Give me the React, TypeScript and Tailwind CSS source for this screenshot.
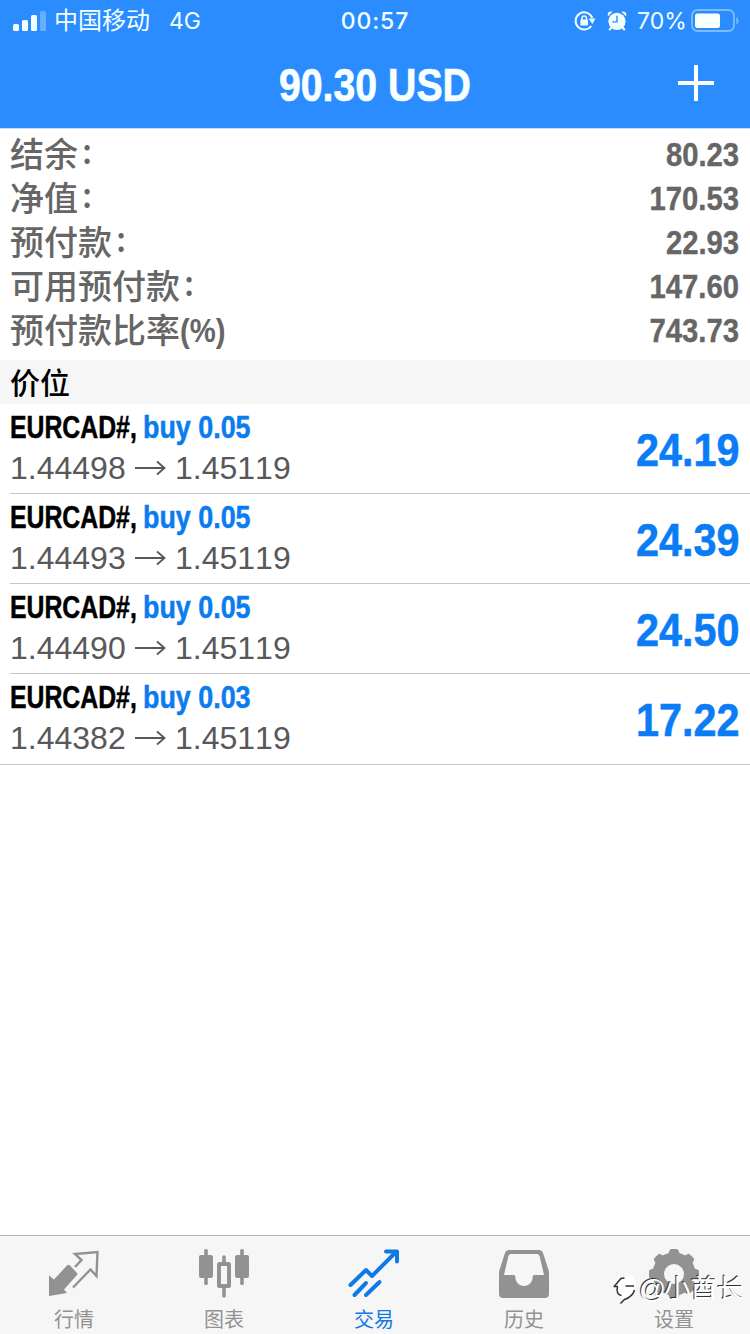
import type { ReactNode } from "react";

const summary = [
  { label: "结余", colon: true, value: "80.23" },
  { label: "净值", colon: true, value: "170.53" },
  { label: "预付款", colon: true, value: "22.93" },
  { label: "可用预付款", colon: true, value: "147.60" },
  { label: "预付款比率", colon: false, value: "743.73" },
];

const positions = [
  { volume: "buy 0.05", open: "1.44498", now: "1.45119", profit: "24.19" },
  { volume: "buy 0.05", open: "1.44493", now: "1.45119", profit: "24.39" },
  { volume: "buy 0.05", open: "1.44490", now: "1.45119", profit: "24.50" },
  { volume: "buy 0.03", open: "1.44382", now: "1.45119", profit: "17.22" },
];

const gearTeeth = [0, 45, 90, 135, 180, 225, 270, 315];

function StatusBar() {
  return (
    <div className="flex h-[41px] items-center justify-between text-[#f2ffff]">
      <div className="flex w-[300px] items-center pl-[13px]">
        <svg width="34" height="20" viewBox="0 -1 34 20" fill="currentColor">
          <rect x="0" y="12" width="6" height="7" rx="1.5" />
          <rect x="9" y="8" width="6" height="11" rx="1.5" />
          <rect x="18" y="3" width="6" height="16" rx="1.5" />
          <rect x="27" y="-1" width="6" height="20" rx="1.5" opacity=".3" />
        </svg>
        <span className="ml-[7px] mt-px text-[24px] leading-10">中国移动</span>
        <span className="ml-[19px] mt-px font-['Inter'] text-[23px] leading-10">4G</span>
      </div>
      <span className="mt-px font-['Inter'] text-[23px] font-medium leading-10 tracking-[0.9px]">00:57</span>
      <div className="flex w-[300px] items-center justify-end pr-[11px]">
        <svg width="22" height="22" viewBox="0 0 22 22" fill="none" stroke="currentColor" strokeWidth="2">
          <path d="M17.2 16A8.6 8.6 0 1 1 18.3 8" />
          <path d="M14.5 8.5h7L18.4 14z" fill="currentColor" stroke="none" />
          <rect x="6.4" y="9.6" width="7.6" height="5.9" rx=".7" fill="currentColor" stroke="none" />
          <path d="M8 10V8.2a2.2 2.2 0 0 1 4.4 0V10" strokeWidth="1.5" />
        </svg>
        <svg className="ml-[11px]" width="20" height="22" viewBox="0 0 20 22" fill="currentColor">
          <circle cx="10" cy="11.3" r="8.6" />
          <path d="M1 6.2C-.2 3 2.2.8 5.5 1.8zM19 6.2C20.2 3 17.8.8 14.5 1.8zM3.8 16.5l1.6 1.4-2.4 2.8-1.6-1.2zM16.2 16.5l-1.6 1.4 2.4 2.8 1.6-1.2z" />
          <path d="M10 5.8v6.1H5.3" fill="none" stroke="#2a8cff" strokeWidth="1.4" />
        </svg>
        <span className="ml-[10px] mt-px w-[50px] whitespace-nowrap font-['Inter'] text-[23px] leading-10">70%</span>
        <svg className="ml-[4px] mr-[-1px]" width="49" height="24" viewBox="0 0 49 24">
          <rect x="1" y="1" width="42" height="21" rx="5.5" fill="none" stroke="#7dbcff" strokeWidth="1.8" />
          <rect x="4" y="4.5" width="25" height="14.5" rx="2.5" fill="#f8ffff" />
          <path d="M45.3 8c3 1.5 3 6 0 7.5z" fill="#7dbcff" />
        </svg>
      </div>
    </div>
  );
}

function SummaryRow({ label, colon, value }: (typeof summary)[number]) {
  return (
    <div className="flex h-11 items-center justify-between pl-[10px] pr-[11px] text-[34px] leading-[44px] text-[#666]">
      <div className="mt-[-3px] flex items-center whitespace-nowrap font-medium">
        <span className="font-['Noto_Sans_CJK_SC']">{label}</span>
        {colon ? (
          <span className="ml-[4px] mt-[-5px] font-['Noto_Sans_CJK_SC']">:</span>
        ) : (
          <span className="mt-[2px] h-11 w-[46px]">
            <span className="inline-block origin-left scale-x-[0.86] font-bold">
              (%)
            </span>
          </span>
        )}
      </div>
      <span className="origin-right scale-x-[0.86] font-bold [-webkit-text-stroke:0.4px_currentColor]">{value}</span>
    </div>
  );
}

function PositionRow({ volume, open, now, profit, last }: (typeof positions)[number] & { last: boolean }) {
  return (
    <div className={last ? "h-[91px] border-b border-[#c6c6c8] pl-[10px]" : "h-[90px] pl-[10px]"}>
      <div className={last ? "flex h-full justify-between pr-[10px]" : "flex h-full justify-between border-b border-[#c6c6c8] pr-[10px]"}>
        <div>
          <div className="flex h-[46px] whitespace-nowrap text-[32px] font-bold leading-[46px] [-webkit-text-stroke:0.5px_currentColor]">
            <span className="w-[133px]">
              <span className="inline-block origin-left scale-x-[0.775] text-black">EURCAD#,</span>
            </span>
            <span className="inline-block origin-left scale-x-[0.84] text-[#0a7cef]">{volume}</span>
          </div>
          <div className="flex h-9 items-center text-[32px] leading-9 text-[#58585a] [font-kerning:none]">
            <span className="w-[124px]">{open}</span>
            <svg width="32" height="18" viewBox="0 0 32 18" fill="none" stroke="currentColor" strokeWidth="1.8">
              <path d="M1 9h30M23 2.5l7.5 6.5-7.5 6.5" />
            </svg>
            <span className="ml-[9px]">{now}</span>
          </div>
        </div>
        <span className="origin-right scale-x-[0.88] text-[47px] font-bold leading-[92px] text-[#0a7cf5] [-webkit-text-stroke:0.6px_currentColor]">{profit}</span>
      </div>
    </div>
  );
}

function Tab({ label, active = false, children }: { label: string; active?: boolean; children: ReactNode }) {
  return (
    <div className={active ? "flex flex-1 flex-col items-center pt-[13px] text-[#0f79e6]" : "flex flex-1 flex-col items-center pt-[13px] text-[#929292]"}>
      <svg className="mr-[2px]" width="54" height="52" viewBox="0 0 54 52" fill="none" stroke="currentColor">
        {children}
      </svg>
      <span className="mr-[2px] mt-[5px] text-[20px] leading-7">{label}</span>
    </div>
  );
}

function TabBar() {
  return (
    <nav className="flex h-[99px] border-t border-[#b2b2b2] bg-[#f6f6f6]">
      <Tab label="行情">
        <path d="M2 26.5l5 4L20 16.5q1.5-1.5 3 0l7 7.5q1 1 0 2L17 40.500l3 3.500L2 47z" fill="currentColor" stroke="none" />
        <path d="M28 18L34.500 11 28 5 50.500 3 49.500 27 43.500 20.500 26 38.500" strokeWidth="2.4" />
      </Tab>
      <Tab label="图表">
        <g fill="currentColor" stroke="none">
          <rect x="2" y="6" width="14" height="23" rx="2" />
          <rect x="7.2" y="0" width="3.6" height="36" rx="1.5" />
          <rect x="38" y="6" width="14" height="23" rx="2" />
          <rect x="43.2" y="0" width="3.6" height="36" rx="1.5" />
        </g>
        <rect x="22" y="15" width="10" height="22" rx=".5" strokeWidth="4" />
        <path d="M27 8v6M27 38v9" strokeWidth="3.6" strokeLinecap="round" />
      </Tab>
      <Tab label="交易" active>
        <path d="M3.500 36L19 21l6 6L49 3M39 2.500h11v10" strokeWidth="4" strokeLinecap="round" strokeLinejoin="round" />
        <path d="M7.500 46L19 34M19 46L32.500 33" strokeWidth="4" strokeLinecap="round" />
      </Tab>
      <Tab label="历史">
        <path fill="currentColor" stroke="none" fillRule="evenodd" d="M12 1h30q3 0 4 3l5.5 17q.5 2 .5 4v20q0 4-4 4H6q-4 0-4-4V25q0-2 .5-4L8 4q1-3 4-3zM14 5q-2 0-2.6 2L7 26h10q1.300 0 1.300 1.500C18.300 33 22 37 27 37s8.700-4 8.700-9.500Q35.700 26 37 26h10L42.600 7Q42 5 40 5z" />
      </Tab>
      <Tab label="设置">
        <circle cx="27" cy="25" r="15.700" strokeWidth="11.400" />
        {gearTeeth.map((angle) => (
          <path key={angle} d="M20 6.500Q22 4 22.500 1.500 22.800 0 24.500 0h5q1.700 0 2 1.500Q32 4 34 6.500z" fill="currentColor" stroke="none" transform={`rotate(${angle} 27 25)`} />
        ))}
      </Tab>
    </nav>
  );
}

export default function App() {
  return (
    <div className="relative flex h-[1334px] w-[750px] flex-col overflow-hidden bg-white font-['Liberation_Sans','Noto_Sans_CJK_SC',sans-serif]">
      <header className="h-32 bg-[#2a8cff]">
        <StatusBar />
        <div className="grid h-[87px] grid-cols-[1fr_auto_1fr] items-center">
          <span />
          <h1 className="mt-px scale-x-[0.835] text-[47px] font-bold leading-[86px] text-[#f8ffff] [-webkit-text-stroke:0.7px_currentColor]">90.30 USD</h1>
          <svg className="mb-[4px] mr-[36px] justify-self-end" width="36" height="36" viewBox="0 0 36 36" stroke="#fff" strokeWidth="4">
            <path d="M18 0v36M0 18h36" />
          </svg>
        </div>
      </header>
      <section className="h-[232px] border-t border-[#c4dcf5] pt-[3px]">
        {summary.map((row) => (
          <SummaryRow key={row.label} {...row} />
        ))}
      </section>
      <h2 className="h-11 bg-[#f6f6f6] pl-[10px] font-['Noto_Sans_CJK_SC'] text-[30px] font-medium leading-[42px] text-black">价位</h2>
      <section className="flex-1">
        {positions.map((row, i) => (
          <PositionRow key={row.open} {...row} last={i === positions.length - 1} />
        ))}
      </section>
      <TabBar />
      <div className="absolute left-[612px] top-[1272px] flex items-center whitespace-nowrap text-[26.5px] leading-8 text-white [text-shadow:-1px_-1px_0.5px_#333]">
        <svg width="26" height="34" viewBox="0 0 26 34" fill="none">
          <path d="M11 6q7-6 11.500 1.500 3 8-3 14-3 3-8 6.500L6 22 7 14H3l6-7z" fill="#fff" />
          <path d="M2.500 14L9 6.500l3.500-.5M1.500 14.500h4.500M5.500 15c-1.500 5 .5 8 4 8.500M13.500 14h8.500M22.500 18c-1.500 5-5.500 8-10 9.500l-4 4" stroke="#333" strokeWidth="1.500" />
        </svg>
        <span className="ml-px">@</span>
        <span className="ml-[-2px]">小酋长</span>
      </div>
    </div>
  );
}
